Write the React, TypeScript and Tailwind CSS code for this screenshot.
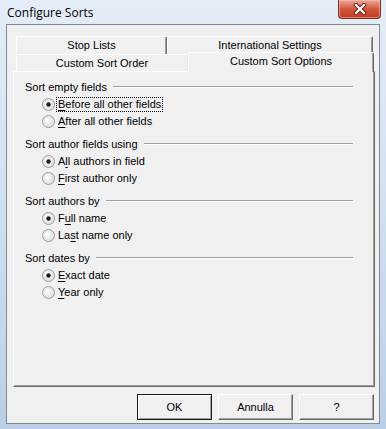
import React from 'react'

const ui = { fontFamily: '"Liberation Sans", Arial, sans-serif' }

function Radio({ checked }: { checked?: boolean }) {
  return (
    <svg width="13" height="13" viewBox="0 0 13 13" className="shrink-0">
      <defs>
        <radialGradient id="rg" cx="0.35" cy="0.35" r="0.8">
          <stop offset="0" stopColor="#ffffff" />
          <stop offset="1" stopColor="#d9d9d9" />
        </radialGradient>
      </defs>
      <circle cx="6.5" cy="6.5" r="6" fill="url(#rg)" stroke="#9a9a9a" />
      <circle cx="6.5" cy="6.5" r="4.5" fill="none" stroke="#e4e4e4" />
      {checked && <circle cx="6.5" cy="6.5" r="2.2" fill="#1c1c1c" />}
    </svg>
  )
}

function Option({ pre, key1, post, checked, focus }: { pre: string; key1: string; post: string; checked?: boolean; focus?: boolean }) {
  return (
    <div className="flex items-center h-[17px] ml-[17px] gap-[3px]">
      <Radio checked={checked} />
      <span className={focus ? 'outline outline-1 outline-dotted outline-black px-[1px] -ml-[1px] leading-[13px]' : 'leading-[13px]'}>
        {pre}
        <span className="underline underline-offset-[2px]">{key1}</span>
        {post}
      </span>
    </div>
  )
}

function Group({ title, children }: { title: string; children: React.ReactNode }) {
  return (
    <div className="mb-[6px]">
      <div className="flex items-center h-[17px]">
        <span>{title}</span>
        <div className="flex-1 ml-[6px] border-t border-t-[#a0a0a0] border-b border-b-white -mt-[2px]" />
      </div>
      {children}
    </div>
  )
}

function Tab({ label, className }: { label: string; className: string }) {
  return (
    <div className={`flex items-center justify-center bg-[#f0f0f0] border-t border-l border-white border-r border-r-[#696969] shadow-[inset_-1px_0_0_#a0a0a0] rounded-tl-[2px] rounded-tr-[2px] ${className}`}>
      {label}
    </div>
  )
}

function Button({ label, def }: { label: string; def?: boolean }) {
  return (
    <div
      className={
        def
          ? 'w-[75px] h-[26px] flex items-center justify-center bg-[#f0f0f0] border border-[#1a1a1a] shadow-[inset_1px_1px_0_#ffffff,inset_-1px_-1px_0_#a0a0a0]'
          : 'w-[75px] h-[26px] flex items-center justify-center bg-[#f0f0f0] border border-t-white border-l-white border-r-[#696969] border-b-[#696969] shadow-[inset_-1px_-1px_0_#a0a0a0]'
      }
    >
      {label}
    </div>
  )
}

export default function App() {
  return (
    <div className="w-[386px] h-[429px] flex flex-col bg-gradient-to-b from-[#e4edf7] via-[#d0dfef] to-[#b9cfe7] overflow-hidden">
      <div className="h-[24px] flex items-start justify-between">
        <span className="text-[12px] text-black pl-[7px] pt-[4px]" style={{ fontFamily: '"Open Sans", "Noto Sans", sans-serif' }}>
          Configure Sorts
        </span>
        <div className="mr-[5px] w-[43px] h-[19px] rounded-b-[4px] border border-[#7b3022] border-t-0 bg-gradient-to-b from-[#e9a797] via-[#d2553d] to-[#c23b20] flex items-center justify-center shadow-[inset_0_0_0_1px_rgba(255,200,190,0.5)]">
          <svg width="14" height="12" viewBox="0 0 14 12">
            <path d="M3 2 L11 10 M11 2 L3 10" stroke="#5a1f14" strokeWidth="4" strokeLinecap="square" />
            <path d="M3 2 L11 10 M11 2 L3 10" stroke="#ffffff" strokeWidth="2.2" strokeLinecap="square" />
          </svg>
        </div>
      </div>
      <div className="mx-[6px] h-[400px] border border-[#7f8a97] bg-[#f0f0f0] text-[11px] text-black flex flex-col" style={ui}>
        <div className="pl-[6px] pt-[11px]">
          <div className="flex ml-[3px] h-[18px]">
            <Tab label="Stop Lists" className="w-[151px] h-[18px]" />
            <Tab label="International Settings" className="w-[206px] h-[18px]" />
          </div>
          <div className="flex ml-[3px] h-[17px] items-end">
            <Tab label="Custom Sort Order" className="w-[172px] h-[17px] shadow-none border-r-[#e8e8e8]" />
            <Tab label="Custom Sort Options" className="w-[186px] h-[20px] relative z-10 -mb-[1px] pb-[2px]" />
          </div>
          <div className="w-[362px] h-[316px] border-t border-l border-white border-r border-b border-r-[#696969] border-b-[#696969] shadow-[inset_-1px_-1px_0_#a0a0a0] pl-[11px] pr-[21px] pt-[7px]">
            <Group title="Sort empty fields">
              <Option pre="" key1="B" post="efore all other fields" checked focus />
              <Option pre="" key1="A" post="fter all other fields" />
            </Group>
            <Group title="Sort author fields using">
              <Option pre="A" key1="l" post="l authors in field" checked />
              <Option pre="" key1="F" post="irst author only" />
            </Group>
            <Group title="Sort authors by">
              <Option pre="F" key1="u" post="ll name" checked />
              <Option pre="La" key1="s" post="t name only" />
            </Group>
            <Group title="Sort dates by">
              <Option pre="" key1="E" post="xact date" checked />
              <Option pre="" key1="Y" post="ear only" />
            </Group>
          </div>
        </div>
        <div className="flex justify-end gap-[6px] pr-[5px] mt-[7px]">
          <Button label="OK" def />
          <Button label="Annulla" />
          <Button label="?" />
        </div>
      </div>
    </div>
  )
}
